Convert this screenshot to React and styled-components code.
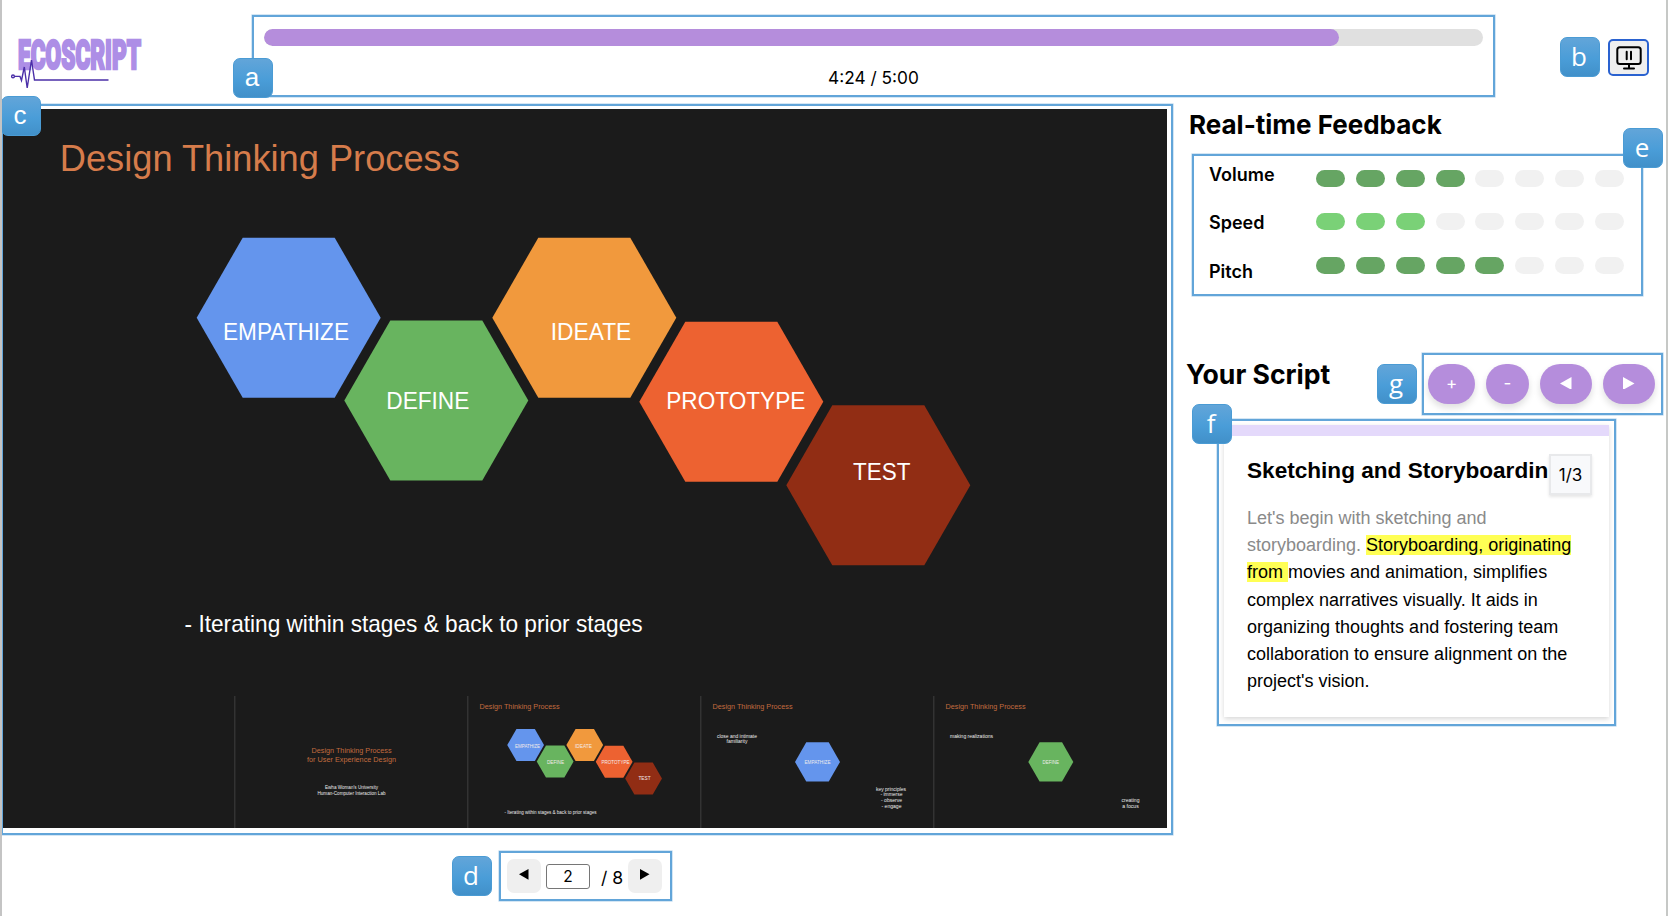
import React from "react";
import styled, { createGlobalStyle } from "styled-components";

const GlobalStyle = createGlobalStyle`
  * { box-sizing: border-box; }
  body { margin: 0; background: #fff; font-family: Inter, "Liberation Sans", sans-serif; color: #000; }
  button, input { font: inherit; margin: 0; }
`;

const arial = '"Liberation Sans", Arial, sans-serif';

const Page = styled.div`
  width: 1670px;
  height: 916px;
  display: flex;
  flex-direction: column;
  overflow: hidden;
  border-left: 2px solid #c4c4c4;
  background: linear-gradient(#c6c8c6, #c6c8c6) no-repeat 1664px 0 / 2px 100%, #fff;
`;

const Frame = styled.section`
  position: relative;
  border: 2px solid #62a5d9;
  box-shadow: 0 0 0 0.6px rgba(98, 165, 217, 0.45);
`;

const Badge = styled.span`
  position: ${(p) => (p.$inline ? "relative" : "absolute")};
  ${(p) => !p.$inline && `left: ${p.$x}px; top: ${p.$y}px;`}
  z-index: 2;
  width: 40px;
  height: 40px;
  flex: none;
  padding-right: 2px;
  border: 1px solid #4a9bd4;
  border-radius: 7px;
  background: linear-gradient(#62a5d9, #4a9dd8 55%, #4190c9);
  color: #fff;
  font: 400 26px/36px ${(p) => (p.$sans ? arial : '"Open Sans", "Noto Sans", sans-serif')};
  text-align: center;
`;

const Header = styled.header`
  display: flex;
  height: 104px;
  flex: none;
`;

const Logo = styled.svg`
  width: 142px;
  height: 70px;
  margin: 30px 108px 0 0;
  flex: none;
  overflow: visible;
`;

const ProgressFrame = styled(Frame)`
  width: 1243px;
  height: 82px;
  margin-top: 15px;
  padding: 12px 10px 0;
  flex: none;
`;

const Track = styled.div`
  height: 17px;
  border-radius: 9px;
  background: #e0e0e0;
  overflow: hidden;
`;

const Fill = styled.div`
  height: 100%;
  border-radius: 9px;
  background: #b58ddc;
`;

const Time = styled.div`
  margin-top: 21px;
  font-size: 17.3px;
  line-height: 22px;
  text-align: center;
`;

const Presenter = styled.div`
  display: flex;
  gap: 8px;
  margin: 37px 0 0 65px;
`;

const PauseButton = styled.button`
  width: 41px;
  height: 37px;
  margin-top: 2px;
  padding: 0;
  display: grid;
  place-items: center;
  border: 2px solid #2a62d0;
  border-radius: 5px;
  background: #efefef;
`;

const Main = styled.main`
  display: flex;
  height: 731px;
  flex: none;
`;

const SlideFrame = styled(Frame)`
  width: 1172px;
  height: 731px;
  margin-left: -1px;
  padding-top: 3px;
  flex: none;
`;

const Slide = styled.svg`
  display: block;
  width: 1164px;
  height: 719px;
  background: #1b1b1b;
  font-family: ${arial};
`;

const Side = styled.aside`
  width: 493px;
  flex: none;
`;

const Heading = styled.h2`
  margin: 0;
  font-size: ${(p) => p.$size || 26}px;
  line-height: 32px;
  font-weight: 700;
  white-space: nowrap;
`;

const FeedbackHead = styled.div`
  padding: 5px 0 0 16px;
  height: 50px;
`;

const FeedbackFrame = styled(Frame)`
  display: flex;
  justify-content: space-between;
  width: 451px;
  height: 142px;
  margin-left: 19px;
  padding: 8px 17px 0 15px;
`;

const Labels = styled.div`
  display: grid;
  grid-auto-rows: 48.4px;
  align-content: start;
  font-size: 18px;
  line-height: 22px;
  font-weight: 600;
`;

const Meters = styled.div`
  display: flex;
  flex-direction: column;
  gap: 26.5px;
  padding-top: 5.5px;
`;

const Meter = styled.div`
  display: flex;
  gap: 10.85px;
`;

const Pill = styled.i`
  width: 29px;
  height: 17px;
  border-radius: 9px;
  background: ${(p) => p.$color};
`;

const ScriptHead = styled.div`
  display: flex;
  align-items: flex-start;
  margin: 57px 0 0 13px;
  height: 66px;

  h2 { width: 191px; margin-top: 5px; }
  > span { margin-top: 11px; }
`;

const ControlFrame = styled(Frame)`
  display: flex;
  align-items: flex-start;
  width: 241px;
  height: 62px;
  margin-left: 5px;
  padding: 9px 0 0 4px;
  flex: none;
`;

const RoundButton = styled.button`
  width: ${(p) => p.$w}px;
  height: 40px;
  margin-right: 11px;
  padding: 0 0 2px;
  display: grid;
  place-items: center;
  flex: none;
  border: 0;
  border-radius: 22px;
  background: #b58ddc;
  color: #fff;
  font: 400 17px/20px Inter, sans-serif;
  box-shadow: 0 4px 7px rgba(0, 0, 0, 0.13);
`;

const ScriptFrame = styled(Frame)`
  width: 399px;
  height: 307px;
  margin-left: 44px;
  padding: 4px 5px 0;
`;

const Card = styled.article`
  position: relative;
  height: 292px;
  padding: 19px 22px 0 23px;
  border-top: 11px solid #e4d9fb;
  box-shadow: 0 2px 5px rgba(0, 0, 0, 0.16);
  font-family: ${arial};
`;

const CardTitle = styled.h3`
  margin: 0 0 18px;
  font-size: 22.6px;
  line-height: 32px;
  font-weight: 700;
  white-space: nowrap;
  width: 303px;
`;

const Counter = styled.div`
  position: absolute;
  right: 17px;
  top: 18px;
  width: 43px;
  height: 41px;
  border: 2px solid #e8e9eb;
  background: #f8f9fb;
  box-shadow: 0 2px 3px rgba(0, 0, 0, 0.1);
  font: 400 17px/38px Inter, sans-serif;
  text-align: center;
`;

const Script = styled.p`
  margin: 0;
  width: 340px;
  font-size: 18px;
  line-height: 27.2px;
`;

const Read = styled.span`
  color: #8a8a8a;
`;

const Mark = styled.mark`
  background: #ffff54;
  color: #000;
`;

const Footer = styled.footer`
  display: flex;
  align-items: flex-start;
  padding: 16px 0 0 450px;

  > span { margin-top: 5px; }
`;

const PagerFrame = styled(Frame)`
  display: flex;
  align-items: center;
  width: 173px;
  height: 50px;
  margin-left: 7px;
  padding: 0 8px 0 6px;
  font-size: 17.6px;
`;

const PageButton = styled.button`
  width: 34px;
  height: 34px;
  padding: 0 0 3px;
  display: grid;
  place-items: center;
  border: 0;
  border-radius: 7px;
  background: #efefef;
`;

const PageInput = styled.input`
  width: 44px;
  height: 25px;
  margin: 1px 11px 0 5px;
  padding: 0;
  border: 1px solid #767676;
  border-radius: 3px;
  font-size: 15.5px;
  text-align: center;
`;

const PageTotal = styled.span`
  flex: 1;
  padding-top: 3px;
  white-space: pre;
`;

const HEX = {
  empathize: "#6495ed",
  define: "#68b45f",
  ideate: "#f1993d",
  prototype: "#ed6231",
  test: "#912d14",
};

function Hex({ x, y, w = 184, h = 160, fill }) {
  const points = [[0, 0.5], [0.25, 0], [0.75, 0], [1, 0.5], [0.75, 1], [0.25, 1]]
    .map(([a, b]) => `${x + a * w},${y + b * h}`)
    .join(" ");
  return <polygon points={points} fill={fill} />;
}

function Label({ x, y, size, w, fill = "#fff", anchor = "start", children }) {
  return (
    <text x={x} y={y} fontSize={size} fill={fill} textAnchor={anchor} textLength={w}
      lengthAdjust="spacingAndGlyphs">{children}</text>
  );
}

const ORANGE = "#d67c4b";

const stages = [
  { name: "EMPATHIZE", fill: HEX.empathize, x: 193.7, y: 128.7, tx: 220, ty: 231, w: 126, mx: 44.5, my: 52.3, mw: 25 },
  { name: "DEFINE", fill: HEX.define, x: 341.3, y: 211.5, tx: 383.3, ty: 299.5, w: 83, mx: 76.5, my: 68, mw: 17 },
  { name: "IDEATE", fill: HEX.ideate, x: 489.3, y: 128.7, tx: 547.8, ty: 231, w: 80.5, mx: 104.5, my: 52.3, mw: 17 },
  { name: "PROTOTYPE", fill: HEX.prototype, x: 636.3, y: 212.7, tx: 663.3, ty: 299.5, w: 139, mx: 131, my: 68, mw: 28 },
  { name: "TEST", fill: HEX.test, x: 783.3, y: 296.3, tx: 850, ty: 370.5, w: 57.5, mx: 168, my: 84, mw: 12 },
];

function MainSlide() {
  return (
    <g>
      <Label x={56.8} y={62.3} size={36.6} w={400} fill={ORANGE}>Design Thinking Process</Label>
      {stages.map((s) => <Hex key={s.name} x={s.x} y={s.y} fill={s.fill} />)}
      {stages.map((s) => (
        <Label key={s.name} x={s.tx} y={s.ty} size={23.2} w={s.w}>{s.name}</Label>
      ))}
      <Label x={181.6} y={523.3} size={23.2} w={458}>- Iterating within stages &amp; back to prior stages</Label>
    </g>
  );
}

function Thumb({ x, title, children }) {
  return (
    <g transform={`translate(${x} 587)`}>
      <rect x="-1.5" width="1.5" height="132" fill="#333" />
      {title && <Label x={11} y={12.9} size={7.3} w={80} fill="#c26b3f">Design Thinking Process</Label>}
      {children}
    </g>
  );
}

const small = { size: 4.8, anchor: "middle", fill: "#ececec" };

function Thumbnails() {
  return (
    <g>
      <Thumb x={232.5}>
        <Label x={116} y={57.4} size={7.3} w={80} anchor="middle" fill="#c26b3f">Design Thinking Process</Label>
        <Label x={116} y={66} size={7.3} w={89} anchor="middle" fill="#c26b3f">for User Experience Design</Label>
        <Label {...small} x={116} y={93.2} w={53}>Ewha Woman's University</Label>
        <Label {...small} x={116} y={98.6} w={68}>Human-Computer Interaction Lab</Label>
      </Thumb>
      <Thumb x={465.5} title>
        {stages.map((s) => (
          <Hex key={s.name} x={s.x / 5} y={33 + (s.y - 128.7) / 5} w={36.8} h={32} fill={s.fill} />
        ))}
        {stages.map((s) => (
          <Label key={s.name} x={s.mx + 2} y={s.my} size={4.8} w={s.mw} fill="#f3eaea">{s.name}</Label>
        ))}
        <Label {...small} anchor="start" x={36} y={118.3} w={92}>- Iterating within stages &amp; back to prior stages</Label>
      </Thumb>
      <Thumb x={698.5} title>
        <Label {...small} x={35.5} y={41.8} w={40}>close and intimate</Label>
        <Label {...small} x={35.5} y={47.3} w={21}>familiarity</Label>
        <Hex x={93.5} y={46.3} w={45} h={39.3} fill={HEX.empathize} />
        <Label {...small} x={116} y={67.8} w={26}>EMPATHIZE</Label>
        <Label {...small} x={189.5} y={94.7} w={30}>key principles</Label>
        <Label {...small} x={190} y={100.2} w={22}>- immerse</Label>
        <Label {...small} x={190} y={105.9} w={21}>- observe</Label>
        <Label {...small} x={190} y={111.5} w={20}>- engage</Label>
      </Thumb>
      <Thumb x={931.5} title>
        <Label {...small} x={37} y={41.8} w={43}>making realizations</Label>
        <Hex x={93.8} y={46.3} w={45} h={39.3} fill={HEX.define} />
        <Label {...small} x={116.3} y={67.8} w={16.5}>DEFINE</Label>
        <Label {...small} x={196} y={105.9} w={18}>creating</Label>
        <Label {...small} x={196} y={111.5} w={16.5}>a focus</Label>
      </Thumb>
    </g>
  );
}

function EcoscriptLogo() {
  return (
    <Logo viewBox="2 30 142 70">
      <text x="18" y="69" fontFamily="Roboto, Inter, sans-serif" fontWeight="900" fontSize="41"
        fill="#ad8ee6" stroke="#ad8ee6" strokeWidth="2.6" textLength="123" lengthAdjust="spacingAndGlyphs">ECOSCRIPT</text>
      <g fill="none" stroke="#4b2fa8" strokeWidth="1.4">
        <circle cx="13" cy="76.4" r="1.4" />
        <path d="M14.5 76.4H20L21.5 80.5L24.3 67L27.2 88L31.5 60L34.5 80H108.5" />
      </g>
    </Logo>
  );
}

function Arrow({ left, size = 11 }) {
  return (
    <svg width={size} height={size * 1.12} viewBox="0 0 10 12" preserveAspectRatio="none" fill="currentColor">
      <path d={left ? "M10 0V12L0 6Z" : "M0 0V12L10 6Z"} />
    </svg>
  );
}

const meters = [
  { name: "Volume", level: 4, color: "#66a563" },
  { name: "Speed", level: 3, color: "#7ad177" },
  { name: "Pitch", level: 5, color: "#66a563" },
];

export default function App() {
  return (
    <Page>
      <GlobalStyle />
      <Header>
        <EcoscriptLogo />
        <ProgressFrame>
          <Badge $sans $x={-21} $y={40.5}>a</Badge>
          <Track><Fill style={{ width: "88.2%" }} /></Track>
          <Time>4:24 / 5:00</Time>
        </ProgressFrame>
        <Presenter>
          <Badge $inline>b</Badge>
          <PauseButton aria-label="Pause presentation">
            <svg width="26" height="24" viewBox="0 0 26 24" fill="none" stroke="#000" strokeWidth="2" strokeLinecap="round">
              <rect x="1.3" y="1.3" width="23.4" height="16.6" rx="2.5" />
              <path d="M10.7 5.8V13.3M15 5.8V13.3M13 18V22M8 22.5H18" />
            </svg>
          </PauseButton>
        </Presenter>
      </Header>
      <Main>
        <SlideFrame>
          <Badge $sans $x={-2} $y={-10.5}>c</Badge>
          <Slide viewBox="0 0 1164 719">
            <MainSlide />
            <Thumbnails />
          </Slide>
        </SlideFrame>
        <Side>
          <FeedbackHead><Heading>Real-time Feedback</Heading></FeedbackHead>
          <FeedbackFrame>
            <Badge $x={429} $y={-28}>e</Badge>
            <Labels>{meters.map((m) => <span key={m.name}>{m.name}</span>)}</Labels>
            <Meters>
              {meters.map((m) => (
                <Meter key={m.name}>
                  {Array.from({ length: 8 }, (_, i) => (
                    <Pill key={i} $color={i < m.level ? m.color : "#f1f1f1"} />
                  ))}
                </Meter>
              ))}
            </Meters>
          </FeedbackFrame>
          <ScriptHead>
            <Heading $size={26.6}>Your Script</Heading>
            <Badge $inline>g</Badge>
            <ControlFrame>
              <RoundButton $w={47}>+</RoundButton>
              <RoundButton $w={43}>-</RoundButton>
              <RoundButton $w={52}><Arrow left size={11.5} /></RoundButton>
              <RoundButton $w={52}><Arrow size={11.5} /></RoundButton>
            </ControlFrame>
          </ScriptHead>
          <ScriptFrame>
            <Badge $x={-27} $y={-17}>f</Badge>
            <Card>
              <CardTitle>Sketching and Storyboardin</CardTitle>
              <Counter>1/3</Counter>
              <Script>
                <Read>Let's begin with sketching and storyboarding. </Read>
                <Mark>Storyboarding, originating from </Mark>
                movies and animation, simplifies complex narratives visually. It aids in organizing
                thoughts and fostering team collaboration to ensure alignment on the project's vision.
              </Script>
            </Card>
          </ScriptFrame>
        </Side>
      </Main>
      <Footer>
        <Badge $inline>d</Badge>
        <PagerFrame>
          <PageButton aria-label="Previous slide"><Arrow left size={9.5} /></PageButton>
          <PageInput defaultValue="2" />
          <PageTotal>/ 8</PageTotal>
          <PageButton aria-label="Next slide"><Arrow size={9.5} /></PageButton>
        </PagerFrame>
      </Footer>
    </Page>
  );
}
